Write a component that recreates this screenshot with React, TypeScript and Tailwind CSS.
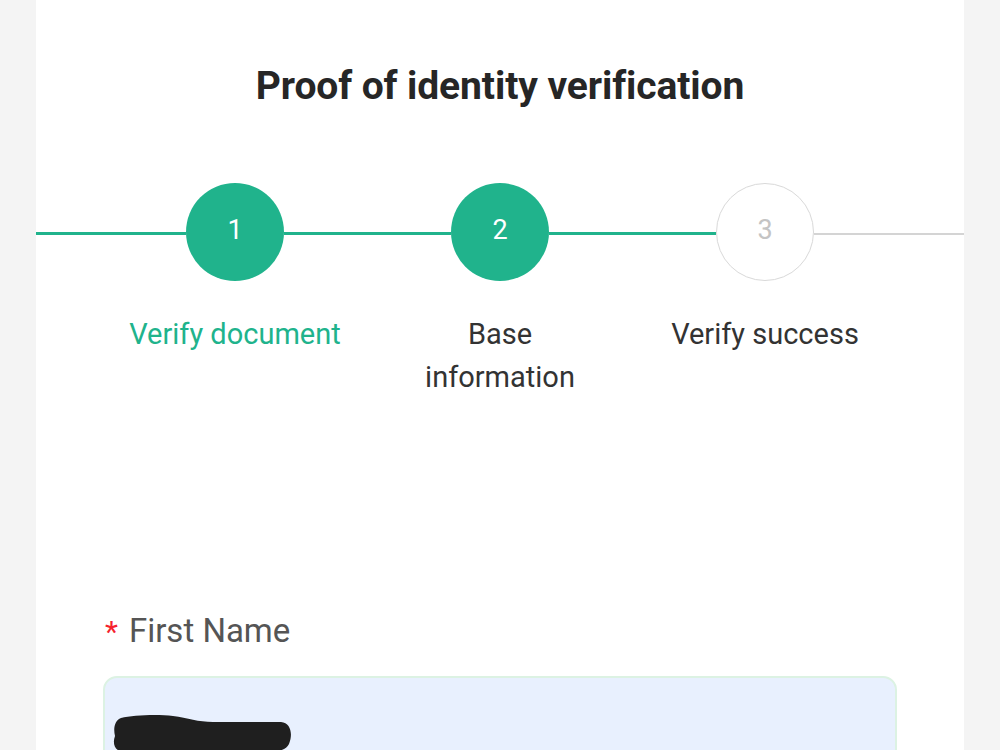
import React from "react";

const TEAL = "#20b38c";

function StepCircle({ n, done }: { n: number; done: boolean }) {
  return done ? (
    <div className="flex h-[98px] w-[98px] shrink-0 items-center justify-center rounded-full bg-[#20b38c] pb-[4px] text-[27px] text-white">
      {n}
    </div>
  ) : (
    <div className="flex h-[98px] w-[98px] shrink-0 items-center justify-center rounded-full border-[1.5px] border-[#d9d9d9] bg-white pb-[4px] text-[27px] text-[#c4c4c4]">
      {n}
    </div>
  );
}

export default function App() {
  return (
    <div
      className="flex min-h-[750px] justify-center bg-[#f4f4f4]"
      style={{ fontFamily: "Roboto, 'Noto Sans', sans-serif" }}
    >
      <div className="h-[750px] w-[928px] overflow-hidden bg-white">
        <h1 className="pt-[62px] text-center text-[39px] font-bold leading-[48px] tracking-[-0.1px] text-[#262626]">
          Proof of identity verification
        </h1>

        {/* stepper track */}
        <div className="mt-[73px] flex items-center">
          <div className="mt-[3px] h-[3px] flex-1 bg-[#20b38c]" />
          <StepCircle n={1} done />
          <div className="mt-[3px] h-[3px] w-[167px] bg-[#20b38c]" />
          <StepCircle n={2} done />
          <div className="mt-[3px] h-[3px] w-[167px] bg-[#20b38c]" />
          <StepCircle n={3} done={false} />
          <div className="mt-[3px] h-[2px] flex-1 bg-[#d4d4d4]" />
        </div>

        {/* step labels */}
        <div className="mt-[32px] flex justify-center text-center text-[29px] leading-[43px]">
          <div className="w-[265px]" style={{ color: TEAL }}>
            Verify document
          </div>
          <div className="w-[265px] text-[#333333]">
            Base
            <br />
            information
          </div>
          <div className="w-[265px] text-[#333333]">Verify success</div>
        </div>

        {/* form */}
        <div className="mt-[210px] px-[67px]">
          <label className="flex items-baseline text-[33px] leading-[44px] text-[#555555]">
            <span className="ml-[2px] mr-[11px] text-[30px] text-[#f5222d]">*</span>
            First Name
          </label>
          <div className="mt-[22px] h-[100px] rounded-[14px] border-2 border-[#dcf2e3] bg-[#e8f0fe] px-[8px] pt-[36px]">
            <svg width="180" height="40" viewBox="0 0 180 40">
              <path
                d="M8 4 C20 1 45 0 60 2 C75 4 85 8 100 8 L168 8 C178 9 180 20 176 30 C172 38 160 38 150 38 L12 38 C2 38 -1 30 2 22 C0 14 2 6 8 4 Z"
                fill="#1f1f1f"
              />
            </svg>
          </div>
        </div>
      </div>
    </div>
  );
}
